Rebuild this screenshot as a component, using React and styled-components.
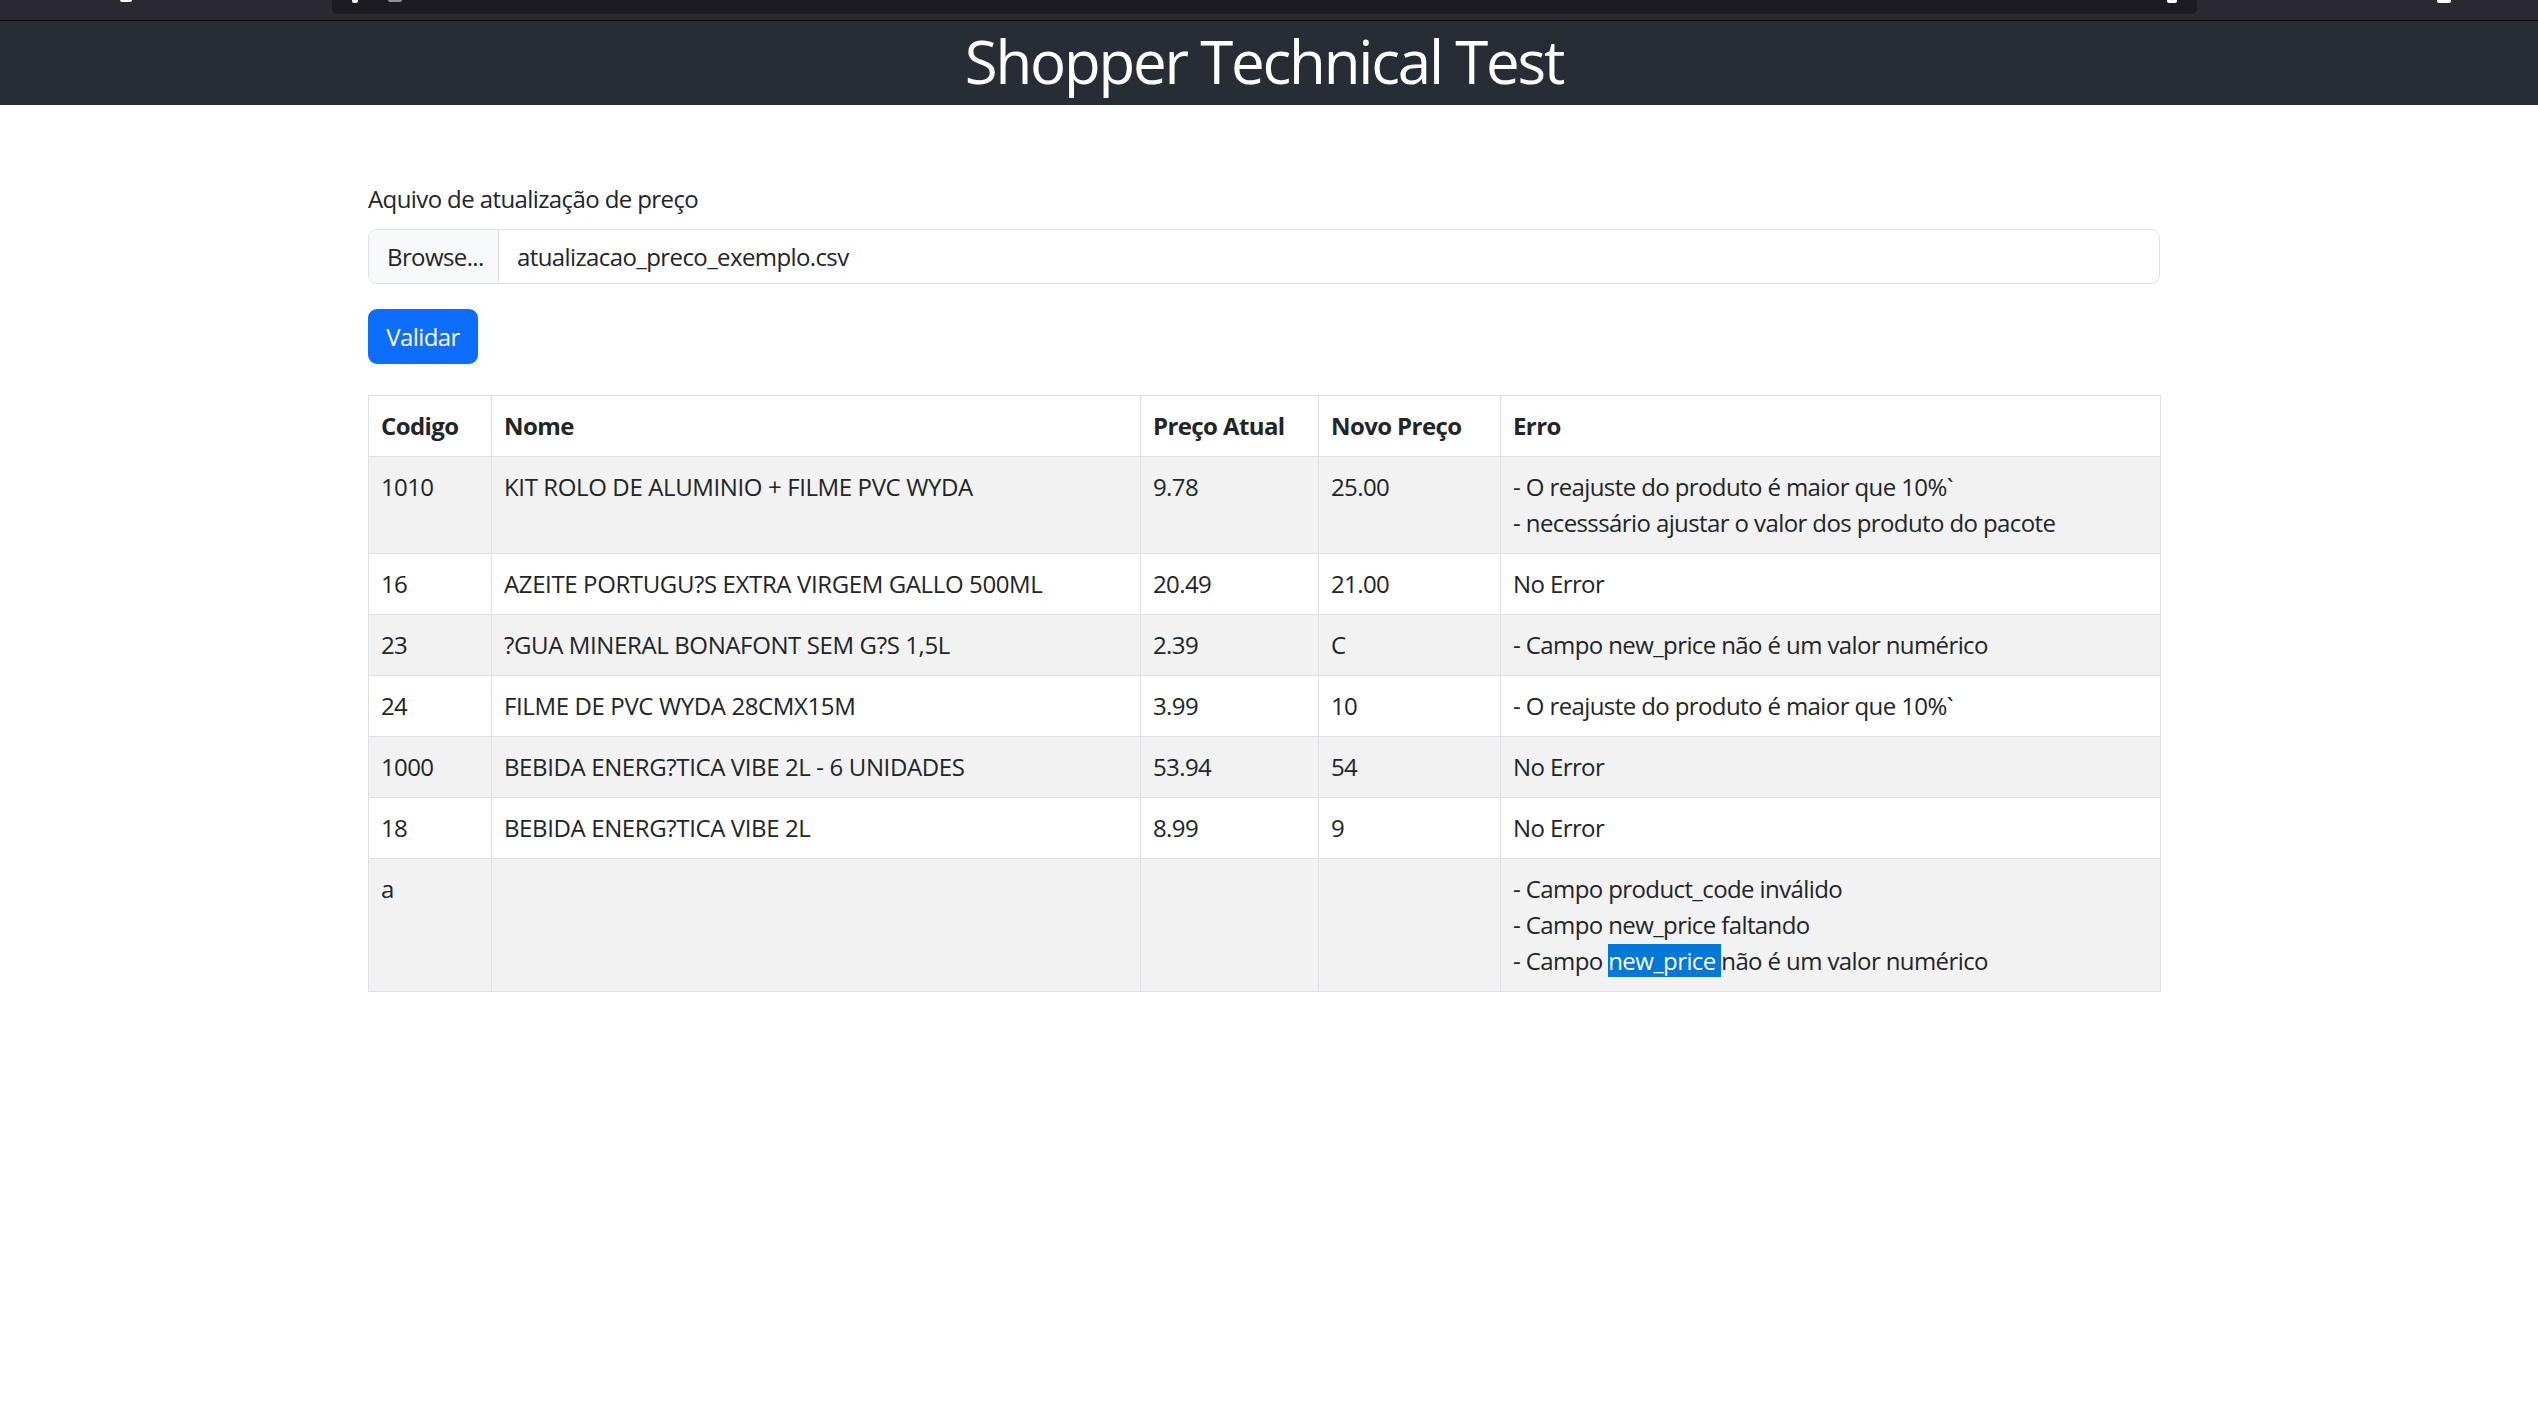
import React from 'react';
import styled, { createGlobalStyle } from 'styled-components';

const Global = createGlobalStyle`
  html, body { margin: 0; padding: 0; background: #fff; }
  body {
    font-family: "Open Sans", "Noto Sans", sans-serif;
    color: #212529;
    font-size: 24px;
    line-height: 1.5;
    letter-spacing: -0.6px;
  }
  * { box-sizing: border-box; }
`;

const BrowserStrip = styled.div`
  height: 21px;
  background: #2b2a33;
  border-bottom: 1px solid #0c0c0d;
  display: flex;
  align-items: flex-start;
  padding-left: 120px;
`;

const StripMark = styled.span`
  display: block;
  width: ${p => p.$w}px;
  height: ${p => p.$h}px;
  margin-left: ${p => p.$ml}px;
  background: ${p => p.$c};
  border-radius: 0 0 2px 2px;
  flex-shrink: 0;
`;

const UrlBar = styled.div`
  width: 1865px;
  height: 14px;
  margin-left: ${p => p.$ml}px;
  background: #1c1b22;
  border-radius: 0 0 5px 5px;
  display: flex;
  align-items: flex-start;
  padding-left: 20px;
  flex-shrink: 0;
`;

const Header = styled.header`
  height: 84px;
  background: #282c34;
  display: flex;
  align-items: center;
  justify-content: center;
  padding-right: 10px;
`;

const Title = styled.h1`
  margin: 0;
  color: #fff;
  font-size: 60px;
  font-weight: 400;
  line-height: 1;
  letter-spacing: -2.2px;
  transform: translateY(-2px);
`;

const Main = styled.main`
  padding: 76px 10px 40px 0;
`;

const Container = styled.div`
  width: 1792px;
  margin: 0 auto;
`;

const Label = styled.label`
  display: block;
  margin-bottom: 12px;
  line-height: 36px;
`;

const FileInput = styled.div`
  display: flex;
  height: 55px;
  border: 1px solid #dee2e6;
  border-radius: 9px;
  overflow: hidden;
  align-items: stretch;
`;

const BrowseButton = styled.span`
  display: flex;
  align-items: center;
  width: 130px;
  padding-left: 18px;
  background: #f8f9fa;
  border-right: 1px solid #dee2e6;
`;

const FileName = styled.span`
  display: flex;
  align-items: center;
  padding-left: 18px;
`;

const Button = styled.button`
  display: block;
  margin-top: 25px;
  width: 110px;
  height: 55px;
  border: none;
  border-radius: 9px;
  background: #0d6efd;
  color: #fff;
  font-family: inherit;
  font-size: 24px;
  letter-spacing: inherit;
  padding: 0;
`;

const Table = styled.table`
  margin-top: 31px;
  width: 1792px;
  border-collapse: collapse;
  table-layout: fixed;
`;

const Th = styled.th`
  text-align: left;
  font-weight: 700;
  padding: 12px;
  line-height: 36px;
  border: 1px solid #dee2e6;
  vertical-align: top;
`;

const Row = styled.tr`
  background: ${p => (p.$striped ? '#f2f2f2' : '#fff')};
`;

const Td = styled.td`
  padding: 12px;
  line-height: 36px;
  border: 1px solid #dee2e6;
  vertical-align: top;
  white-space: nowrap;
  letter-spacing: ${p => (p.$caps ? '-0.38px' : 'inherit')};
`;

const ErrLine = styled.div`
  line-height: 36px;
`;

const Selected = styled.span`
  background: #0078d7;
  color: #fff;
`;

const rows = [
  { code: '1010', name: 'KIT ROLO DE ALUMINIO + FILME PVC WYDA', cur: '9.78', nw: '25.00', errors: ['- O reajuste do produto é maior que 10%`', '- necesssário ajustar o valor dos produto do pacote'] },
  { code: '16', name: 'AZEITE PORTUGU?S EXTRA VIRGEM GALLO 500ML', cur: '20.49', nw: '21.00', errors: ['No Error'] },
  { code: '23', name: '?GUA MINERAL BONAFONT SEM G?S 1,5L', cur: '2.39', nw: 'C', errors: ['- Campo new_price não é um valor numérico'] },
  { code: '24', name: 'FILME DE PVC WYDA 28CMX15M', cur: '3.99', nw: '10', errors: ['- O reajuste do produto é maior que 10%`'] },
  { code: '1000', name: 'BEBIDA ENERG?TICA VIBE 2L - 6 UNIDADES', cur: '53.94', nw: '54', errors: ['No Error'] },
  { code: '18', name: 'BEBIDA ENERG?TICA VIBE 2L', cur: '8.99', nw: '9', errors: ['No Error'] },
];

export default function App() {
  return (
    <>
      <Global />
      <BrowserStrip>
        <StripMark $w={12} $h={2} $ml={0} $c="#fbfbfe" />
        <UrlBar $ml={200}>
          <StripMark $w={6} $h={3} $ml={0} $c="#fbfbfe" />
          <StripMark $w={14} $h={2} $ml={30} $c="#8f8f9d" />
        </UrlBar>
        <StripMark $w={10} $h={3} $ml={-30} $c="#fbfbfe" />
        <StripMark $w={14} $h={3} $ml={260} $c="#fbfbfe" />
      </BrowserStrip>
      <Header>
        <Title>Shopper Technical Test</Title>
      </Header>
      <Main>
        <Container>
          <Label>Aquivo de atualização de preço</Label>
          <FileInput>
            <BrowseButton>Browse...</BrowseButton>
            <FileName>atualizacao_preco_exemplo.csv</FileName>
          </FileInput>
          <Button>Validar</Button>
          <Table>
            <colgroup>
              <col style={{ width: 123 }} />
              <col style={{ width: 649 }} />
              <col style={{ width: 178 }} />
              <col style={{ width: 182 }} />
              <col style={{ width: 660 }} />
            </colgroup>
            <thead>
              <tr>
                <Th>Codigo</Th>
                <Th>Nome</Th>
                <Th>Preço Atual</Th>
                <Th>Novo Preço</Th>
                <Th>Erro</Th>
              </tr>
            </thead>
            <tbody>
              {rows.map((r, i) => (
                <Row key={i} $striped={i % 2 === 0}>
                  <Td>{r.code}</Td>
                  <Td $caps>{r.name}</Td>
                  <Td>{r.cur}</Td>
                  <Td>{r.nw}</Td>
                  <Td>
                    {r.errors.map((e, j) => (
                      <ErrLine key={j}>{e}</ErrLine>
                    ))}
                  </Td>
                </Row>
              ))}
              <Row $striped>
                <Td>a</Td>
                <Td></Td>
                <Td></Td>
                <Td></Td>
                <Td>
                  <ErrLine>- Campo product_code inválido</ErrLine>
                  <ErrLine>- Campo new_price faltando</ErrLine>
                  <ErrLine>
                    - Campo <Selected>new_price </Selected>não é um valor numérico
                  </ErrLine>
                </Td>
              </Row>
            </tbody>
          </Table>
        </Container>
      </Main>
    </>
  );
}
